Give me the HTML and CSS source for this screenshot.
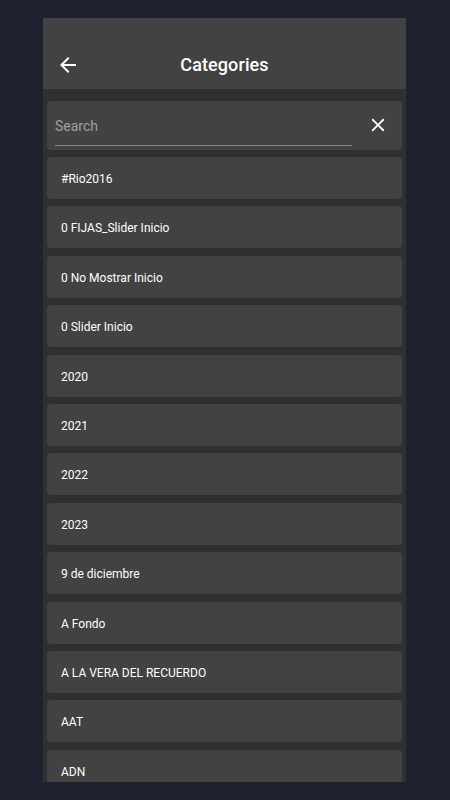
FILE: index.html
```html
<!DOCTYPE html>
<html>
<head>
<meta charset="utf-8">
<link rel="stylesheet" href="styles.css">
</head>
<body>
<div class="phone">
  <header class="appbar">
    <div class="toolbar">
      <span class="back">
        <svg width="24" height="24" viewBox="0 0 24 24"><path d="M20 11H7.83l5.59-5.59L12 4l-8 8 8 8 1.41-1.41L7.83 13H20v-2z" fill="#fff"/></svg>
      </span>
      <h1 class="title">Categories</h1>
    </div>
  </header>
  <main class="list">
    <div class="search card">
      <div class="field">
        <span class="placeholder">Search</span>
      </div>
      <span class="clear">
        <svg width="22" height="22" viewBox="0 0 24 24"><path d="M19 6.41L17.59 5 12 10.59 6.41 5 5 6.41 10.59 12 5 17.59 6.41 19 12 13.41 17.59 19 19 17.59 13.41 12z" fill="#fff"/></svg>
      </span>
    </div>
    <div class="item card">#Rio2016</div>
    <div class="item card">0 FIJAS_Slider Inicio</div>
    <div class="item card">0 No Mostrar Inicio</div>
    <div class="item card">0 Slider Inicio</div>
    <div class="item card">2020</div>
    <div class="item card">2021</div>
    <div class="item card">2022</div>
    <div class="item card">2023</div>
    <div class="item card">9 de diciembre</div>
    <div class="item card">A Fondo</div>
    <div class="item card">A LA VERA DEL RECUERDO</div>
    <div class="item card">AAT</div>
    <div class="item card">ADN</div>
  </main>
</div>
</body>
</html>
```

FILE: styles.css
```css
html, body {
  margin: 0;
  padding: 0;
}
body {
  background: #1f2130;
  font-family: Roboto, "Noto Sans", sans-serif;
  width: 450px;
  height: 800px;
  overflow: hidden;
}
.phone {
  margin: 18px 0 0 43px;
  width: 363px;
  height: 764px;
  background: #303030;
  overflow: hidden;
  display: flex;
  flex-direction: column;
}
.appbar {
  background: #424242;
  height: 71px;
  flex: none;
  padding-top: 22px;
  box-sizing: border-box;
}
.toolbar {
  height: 49px;
  display: flex;
  align-items: center;
  position: relative;
}
.back {
  width: 24px;
  height: 24px;
  margin-left: 13px;
  display: flex;
}
.title {
  position: absolute;
  left: 0;
  right: 0;
  text-align: center;
  margin: 0;
  color: #fff;
  font-size: 18px;
  font-weight: 500;
  letter-spacing: 0.1px;
  pointer-events: none;
}
.list {
  padding: 12px 4px 0;
  display: flex;
  flex-direction: column;
  gap: 7.4px;
}
.card {
  background: #424242;
  border-radius: 4px;
  flex: none;
}
.search {
  height: 49px;
  display: flex;
  align-items: stretch;
  margin-bottom: -0.4px;
}
.field {
  margin-left: 8px;
  width: 297px;
  border-bottom: 1.4px solid #8a8a8a;
  margin-bottom: 4px;
  display: flex;
  align-items: center;
  padding-top: 6px;
  box-sizing: border-box;
}
.placeholder {
  color: #a0a0a0;
  font-size: 14px;
}
.clear {
  margin-left: 15px;
  display: flex;
  align-items: center;
  padding-bottom: 2px;
}
.item {
  height: 42px;
  display: flex;
  align-items: center;
  padding-left: 14px;
  padding-top: 2px;
  box-sizing: border-box;
  color: #fff;
  font-size: 12px;
}
```
